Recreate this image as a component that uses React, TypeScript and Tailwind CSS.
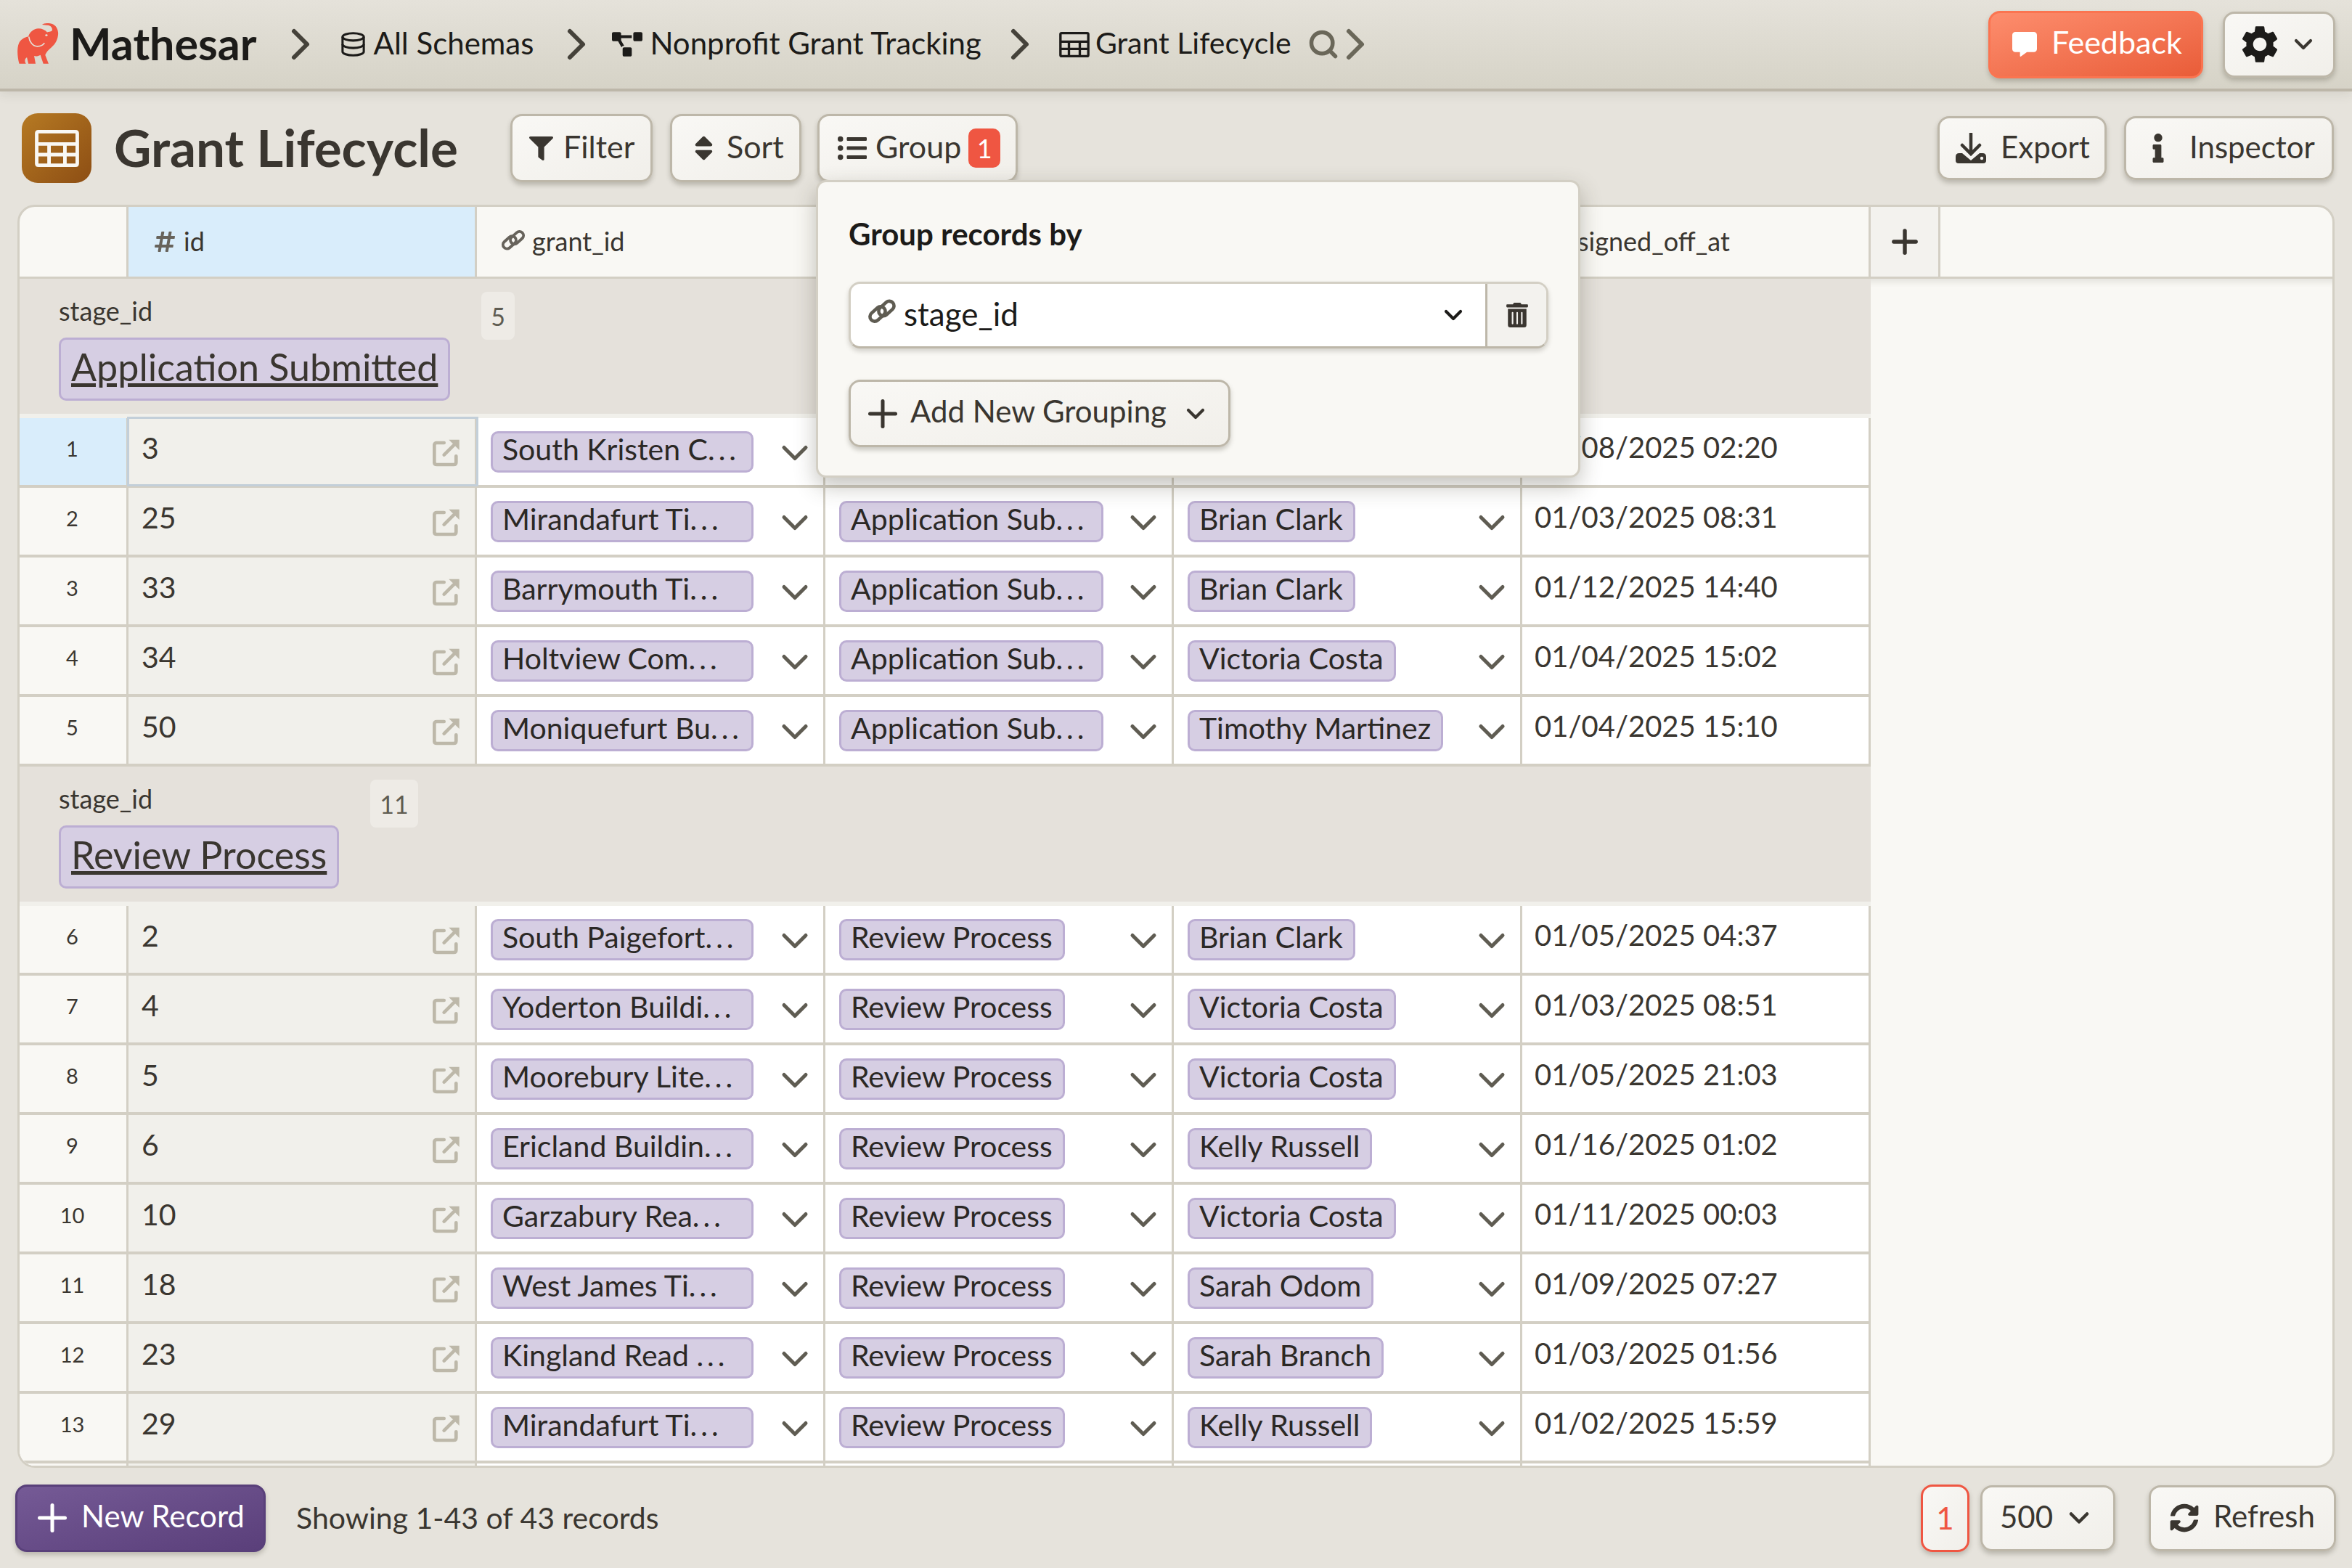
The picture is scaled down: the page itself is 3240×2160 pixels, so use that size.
import React from "react";
import { FaSort, FaFilter, FaListUl, FaInfo, FaHashtag, FaSyncAlt, FaTrashAlt, FaProjectDiagram, FaCommentAlt } from "react-icons/fa";
import { MdSettings } from "react-icons/md";
import { ChevronRight, ChevronDown, Plus, Search } from "lucide-react";

const font = "font-['Lato','Open_Sans',sans-serif]";
const btn = "flex items-center rounded-[16px] border-[3px] border-[#bdb7a9] bg-gradient-to-br from-[#f9f8f5] to-[#f1efea] shadow-[0_4px_6px_rgba(60,55,40,0.25)] text-[#3a3630]";

function Elephant() {
  return (
    <svg viewBox="40 40 180 175" className="w-[60px] h-[58px] shrink-0">
      <path fill="#ef5642" d="M50 208 C42 180 40 145 48 125 C55 108 72 98 88 96 C92 78 110 62 130 62 C145 62 158 68 166 78 C172 76 180 76 186 72 C190 60 182 48 165 48 L145 46 C152 40 170 38 185 42 C205 48 215 70 211 92 C208 112 198 128 184 140 C172 150 162 160 158 172 L172 208 L150 208 C146 195 142 185 138 172 C128 178 118 178 112 176 L118 208 L88 208 L82 182 C72 188 72 200 78 208 Z" />
      <path fill="none" stroke="#e4e1d9" strokeWidth="5" d="M90 96 C92 115 105 135 125 136 C140 136 150 130 155 122" />
      <ellipse cx="163" cy="90" rx="5" ry="4" fill="#e4e1d9" />
    </svg>
  );
}

function TableIcon({ className }: { className: string }) {
  return (
    <svg viewBox="40 35 125 105" className={className}>
      <path fill="currentColor" fillRule="evenodd" d="M50 35 H155 Q165 35 165 45 V130 Q165 140 155 140 H50 Q40 140 40 130 V45 Q40 35 50 35 Z M50 45 V70 H155 V45 Z M50 80 V100 H75 V80 Z M85 80 V100 H120 V80 Z M130 80 V100 H155 V80 Z M50 110 V130 H75 V110 Z M85 110 V130 H120 V110 Z M130 110 V130 H155 V110 Z" />
    </svg>
  );
}

function DbIcon() {
  return (
    <svg viewBox="0 0 96 100" fill="none" stroke="currentColor" strokeWidth="9" className="ml-[20px] w-[33px] h-[34px] shrink-0">
      <ellipse cx="48" cy="20" rx="43" ry="15" />
      <path d="M5 20 V80 C5 88 24 95 48 95 C72 95 91 88 91 80 V20" />
      <path d="M5 50 C5 58 24 65 48 65 C72 65 91 58 91 50" />
    </svg>
  );
}

function LinkIcon({ className }: { className: string }) {
  return (
    <svg viewBox="0 0 40 34" fill="none" stroke="currentColor" strokeWidth="4.6" className={className}>
      <rect x="2" y="14" width="24" height="13" rx="6.5" transform="rotate(-42 14 20.5)" />
      <rect x="14" y="6.5" width="24" height="13" rx="6.5" transform="rotate(-42 26 13)" />
    </svg>
  );
}

function LinkOut() {
  return (
    <svg viewBox="0 0 40 40" className="ml-auto mt-[4px] w-[40px] h-[40px] shrink-0 text-[#bdb8a9]" fill="none" stroke="currentColor" strokeWidth="4.7" strokeLinecap="round" strokeLinejoin="round">
      <path d="M15.7 6 H5.7 Q2.3 6 2.3 9.3 V32.7 Q2.3 36 5.7 36 H29 Q32.3 36 32.3 32.7 V24.3" />
      <path d="M15.7 22.7 L29 9.4" />
      <path d="M22.3 1.7 H36.7 V16 Z" fill="currentColor" stroke="none" />
    </svg>
  );
}

function ExportIcon() {
  return (
    <svg viewBox="0 0 42 42" className="w-[42px] h-[42px] shrink-0">
      <path d="M21 1 V27 M9 17 L21 29 L33 17" fill="none" stroke="currentColor" strokeWidth="4.5" strokeLinecap="round" />
      <path fill="currentColor" d="M0 33 Q0 28 5 28 H9 L21 38 L33 28 H37 Q42 28 42 33 V38 Q42 42 38 42 H4 Q0 42 0 38 Z" />
      <circle cx="36" cy="35" r="2.2" fill="#f5f3ef" />
    </svg>
  );
}

function Chip({ text, w }: { text: string; w?: string }) {
  const cut = text.endsWith("…");
  return (
    <div className={`h-[57px] shrink-0 rounded-[10px] border-[3px] border-[#bcaed3] bg-[#d6cee3] pl-[13px] pr-[14px] text-[41px] leading-[43px] whitespace-nowrap text-[#2b2825] ${w ?? ""}`}>
      {cut ? text.slice(0, -1) : text}
      {cut ? <span className="tracking-[5px]">...</span> : null}
    </div>
  );
}

type R = { n: number; id: number; g: string; s: string; u: string; d: string };
const A = "Application Sub…";
const P = "Review Process";
const g1: R[] = [
  { n: 1, id: 3, g: "South Kristen C…", s: A, u: "Brian Clark", d: "01/08/2025 02:20" },
  { n: 2, id: 25, g: "Mirandafurt Ti…", s: A, u: "Brian Clark", d: "01/03/2025 08:31" },
  { n: 3, id: 33, g: "Barrymouth Ti…", s: A, u: "Brian Clark", d: "01/12/2025 14:40" },
  { n: 4, id: 34, g: "Holtview Com…", s: A, u: "Victoria Costa", d: "01/04/2025 15:02" },
  { n: 5, id: 50, g: "Moniquefurt Bu…", s: A, u: "Timothy Martinez", d: "01/04/2025 15:10" },
];
const g2: R[] = [
  { n: 6, id: 2, g: "South Paigefort…", s: P, u: "Brian Clark", d: "01/05/2025 04:37" },
  { n: 7, id: 4, g: "Yoderton Buildi…", s: P, u: "Victoria Costa", d: "01/03/2025 08:51" },
  { n: 8, id: 5, g: "Moorebury Lite…", s: P, u: "Victoria Costa", d: "01/05/2025 21:03" },
  { n: 9, id: 6, g: "Ericland Buildin…", s: P, u: "Kelly Russell", d: "01/16/2025 01:02" },
  { n: 10, id: 10, g: "Garzabury Rea…", s: P, u: "Victoria Costa", d: "01/11/2025 00:03" },
  { n: 11, id: 18, g: "West James Ti…", s: P, u: "Sarah Odom", d: "01/09/2025 07:27" },
  { n: 12, id: 23, g: "Kingland Read …", s: P, u: "Sarah Branch", d: "01/03/2025 01:56" },
  { n: 13, id: 29, g: "Mirandafurt Ti…", s: P, u: "Kelly Russell", d: "01/02/2025 15:59" },
];

function CellChevron() {
  return <ChevronDown className="ml-auto w-[60px] h-[60px] mt-[4px] text-[#5f5c52] shrink-0" strokeWidth={2} />;
}

function Row({ r }: { r: R }) {
  const active = r.n === 1;
  const cell = "h-full w-[480px] shrink-0 flex items-center border-r-[3px] border-[#d3cfc4]";
  return (
    <div className="flex h-[96px] w-[2550px] shrink-0 border-b-[4px] border-[#d3cfc4] bg-white text-[#3a3630]">
      <div className={`w-[150px] shrink-0 h-full flex items-center justify-center border-r-[3px] border-[#d3cfc4] pr-[2px] pb-[8px] text-[29px] ${active ? "bg-[#d9edfb]" : "bg-[#f9f8f4]"}`}>{r.n}</div>
      <div className={`${cell} bg-[#f1f0eb] pl-[18px] pr-[18px] text-[41px] ${active ? "relative z-10 outline-[3px] outline-[#c3cfd9] -outline-offset-1" : ""}`}>
        <span className="mb-[10px]">{r.id}</span>
        <LinkOut />
      </div>
      <div className={`${cell} pl-[19px] pr-[9px]`}>
        <Chip text={r.g} w="w-[362px]" />
        <CellChevron />
      </div>
      <div className={`${cell} pl-[19px] pr-[9px]`}>
        <Chip text={r.s} w={r.s === A ? "w-[364px]" : undefined} />
        <CellChevron />
      </div>
      <div className={`${cell} pl-[19px] pr-[9px]`}>
        <Chip text={r.u} />
        <CellChevron />
      </div>
      <div className={`${cell} pl-[17px] text-[40px] pb-[12px]`}>{r.d}</div>
    </div>
  );
}

function Group({ title, count }: { title: string; count: number }) {
  return (
    <div className="flex h-[192px] w-[2550px] shrink-0 border-b-[6px] border-[#f1f0eb] bg-[#e5e1db] pl-[54px] pt-[20px]">
      <div className="flex flex-col items-start">
        <div className="text-[36px] leading-[48px] text-[#3a3630]">stage_id</div>
        <div className="mt-[13px] h-[87px] rounded-[10px] border-[3px] border-[#bcaed3] bg-[#d6cee3] px-[14px] text-[52px] leading-[74px] underline whitespace-nowrap text-[#3a3630]">{title}</div>
      </div>
      <div className="ml-[43px] -mt-[2px] h-[66px] rounded-[8px] bg-[#eeebe6] px-[13px] text-[#5f5c52] text-[34px] flex items-center justify-center">{count}</div>
    </div>
  );
}

export default function App() {
  return (
    <div className={`${font} relative flex flex-col w-[3240px] h-[2160px] overflow-hidden bg-[#e6e3dc] text-[#3a3630]`}>
      <header className="h-[126px] shrink-0 flex items-center border-b-[4px] border-[#bdb7a9] bg-gradient-to-b from-[#e5e2da] to-[#d6d3c7] pl-[23px] pr-[23px] text-[#1c1b19] shadow-[0_4px_14px_rgba(60,55,40,0.1)]">
        <Elephant />
        <span className="ml-[13px] text-[61px] font-bold leading-none mb-[4px]">Mathesar</span>
        <ChevronRight className="ml-[24px] w-[72px] h-[72px] text-[#45423a] shrink-0" strokeWidth={2} />
        <DbIcon />
        <span className="ml-[12px] text-[42px] mb-[4px]">All Schemas</span>
        <ChevronRight className="ml-[23px] w-[72px] h-[72px] text-[#45423a] shrink-0" strokeWidth={2} />
        <FaProjectDiagram className="ml-[13px] w-[42px] h-[34px] shrink-0" />
        <span className="ml-[10px] text-[42px] mb-[4px]">Nonprofit Grant Tracking</span>
        <ChevronRight className="ml-[17px] w-[72px] h-[72px] text-[#45423a] shrink-0" strokeWidth={2} />
        <TableIcon className="ml-[18px] w-[42px] h-[35px] shrink-0" />
        <span className="ml-[8px] text-[41px] mb-[4px]">Grant Lifecycle</span>
        <Search className="ml-[22px] w-[44px] h-[44px] text-[#6a6759] shrink-0" strokeWidth={3} />
        <ChevronRight className="-ml-[14px] w-[72px] h-[72px] text-[#6a6759] shrink-0" strokeWidth={2} />
        <div className="ml-auto flex items-center gap-[27px]">
          <div className="flex items-center w-[296px] h-[93px] rounded-[16px] border-[3px] border-[#fb7450] bg-gradient-to-br from-[#fd8d6d] to-[#e95c38] text-white shadow-[0_4px_6px_rgba(60,55,40,0.25)] pl-[30px] text-[43px]">
            <FaCommentAlt className="w-[34px] h-[34px]" />
            <span className="ml-[20px] mb-[6px]">Feedback</span>
          </div>
          <div className={`${btn} w-[155px] h-[91px] pl-[17px]`}>
            <MdSettings className="w-[62px] h-[62px] text-[#1c1b19]" />
            <ChevronDown className="ml-[9px] w-[40px] h-[40px] text-[#3a3630]" strokeWidth={2.5} />
          </div>
        </div>
      </header>

      <div className="h-[156px] shrink-0 flex items-center pl-[30px] pr-[25px]">
        <div className="w-[96px] h-[96px] shrink-0 rounded-[22px] bg-gradient-to-br from-[#b67a23] to-[#8d4e14] flex items-center justify-center">
          <TableIcon className="w-[61px] h-[51px] text-[#f9f8f4]" />
        </div>
        <h1 className="ml-[31px] text-[71px] font-bold leading-none text-[#3a3630] w-[546px] whitespace-nowrap mb-[4px]">Grant Lifecycle</h1>
        <div className={`${btn} w-[196px] h-[94px] pl-[23px] text-[43px] text-[#3a3630]`}>
          <FaFilter className="w-[33px] h-[33px]" />
          <span className="ml-[14px] mb-[4px]">Filter</span>
        </div>
        <div className={`${btn} ml-[24px] w-[181px] h-[94px] pl-[30px] text-[43px]`}>
          <FaSort className="w-[27px] h-[42px]" />
          <span className="ml-[18px] mb-[4px]">Sort</span>
        </div>
        <div className={`${btn} ml-[22px] w-[276px] h-[94px] pl-[23px] text-[43px]`}>
          <FaListUl className="w-[44px] h-[40px]" />
          <span className="ml-[10px] mb-[4px]">Group</span>
          <span className="ml-[10px] w-[44px] h-[54px] rounded-[10px] bg-[#ef5642] text-white text-[36px] flex items-center justify-center">1</span>
        </div>
        <div className={`${btn} ml-auto w-[233px] h-[88px] pl-[22px] text-[42px]`}>
          <ExportIcon />
          <span className="ml-[20px] mb-[4px]">Export</span>
        </div>
        <div className={`${btn} ml-[24px] w-[289px] h-[88px] pl-[26px] text-[42px]`}>
          <FaInfo className="w-[36px] h-[40px]" />
          <span className="ml-[25px] mb-[4px]">Inspector</span>
        </div>
      </div>

      <div className="mx-[24px] flex-1 min-h-0 rounded-[24px] border-[3px] border-[#d3cfc4] bg-[#f9f8f4] overflow-hidden flex flex-col">
        <div className="flex h-[99px] shrink-0 border-b-[3px] border-[#d3cfc4] text-[36px] text-[#3a3630]">
          <div className="w-[150px] shrink-0 border-r-[3px] border-[#d3cfc4]" />
          <div className="w-[480px] shrink-0 flex items-center bg-[#d9edfb] border-r-[3px] border-[#d3cfc4] pl-[34px]">
            <FaHashtag className="w-[32px] h-[32px] text-[#67635b]" />
            <span className="ml-[10px] mb-[2px]">id</span>
          </div>
          <div className="w-[480px] shrink-0 flex items-center border-r-[3px] border-[#d3cfc4] pl-[33px]">
            <LinkIcon className="w-[34px] h-[30px] text-[#67635b] mb-[4px]" />
            <span className="ml-[9px] mb-[2px]">grant_id</span>
          </div>
          <div className="w-[480px] shrink-0 border-r-[3px] border-[#d3cfc4]" />
          <div className="w-[480px] shrink-0 border-r-[3px] border-[#d3cfc4]" />
          <div className="w-[480px] shrink-0 flex items-center border-r-[3px] border-[#d3cfc4] pl-[76px]"><span className="mb-[2px]">signed_off_at</span></div>
          <div className="w-[96px] shrink-0 flex items-center justify-center bg-[#f3f2ee] border-r-[3px] border-[#d3cfc4]">
            <Plus className="w-[52px] h-[52px]" strokeWidth={2.5} />
          </div>
        </div>
        <div className="flex-1 min-h-0 flex flex-col overflow-hidden shadow-[inset_0_12px_10px_-8px_rgba(60,55,40,0.12)]">
          <Group title="Application Submitted" count={5} />
          {g1.map((r) => <Row key={r.n} r={r} />)}
          <Group title="Review Process" count={11} />
          {g2.map((r) => <Row key={r.n} r={r} />)}
          <div className="flex h-[20px] w-[2550px] shrink-0 bg-white">
            <div className="w-[150px] shrink-0 bg-[#f9f8f4] border-r-[3px] border-[#d3cfc4]" />
            <div className="w-[480px] shrink-0 bg-[#f1f0eb] border-r-[3px] border-[#d3cfc4]" />
            <div className="w-[480px] shrink-0 border-r-[3px] border-[#d3cfc4]" />
            <div className="w-[480px] shrink-0 border-r-[3px] border-[#d3cfc4]" />
            <div className="w-[480px] shrink-0 border-r-[3px] border-[#d3cfc4]" />
            <div className="w-[480px] shrink-0 border-r-[3px] border-[#d3cfc4]" />
          </div>
        </div>
      </div>

      <footer className="h-[138px] shrink-0 flex items-center pl-[21px] pr-[22px] text-[42px]">
        <div className="flex items-center w-[345px] h-[93px] rounded-[16px] border-[3px] border-[#59407a] bg-gradient-to-br from-[#755a96] to-[#5a3f7a] text-white pl-[18px] shadow-[0_4px_6px_rgba(60,55,40,0.25)]">
          <Plus className="w-[60px] h-[60px]" strokeWidth={2} />
          <span className="ml-[10px] mb-[6px]">New Record</span>
        </div>
        <span className="ml-[42px] text-[41px]">Showing 1-43 of 43 records</span>
        <div className="ml-auto flex items-center w-[67px] h-[93px] justify-center rounded-[16px] border-[3px] border-[#ef5642] bg-gradient-to-br from-[#f9f8f5] to-[#f1efea] text-[#ef5642] shadow-[0_4px_6px_rgba(60,55,40,0.25)]">1</div>
        <div className={`${btn} ml-[15px] w-[186px] h-[91px] pl-[24px]`}>
          <span className="mb-[4px]">500</span>
          <ChevronDown className="ml-[14px] w-[44px] h-[44px]" strokeWidth={2.5} />
        </div>
        <div className={`${btn} ml-[46px] w-[258px] h-[91px] pl-[26px]`}>
          <FaSyncAlt className="w-[40px] h-[40px]" />
          <span className="ml-[20px] mb-[6px]">Refresh</span>
        </div>
      </footer>

      <div className="absolute left-[1124px] top-[248px] w-[1053px] h-[410px] rounded-[14px] border-[3px] border-[#d3cfc4] bg-[#f9f8f4] shadow-[0_12px_30px_rgba(60,55,40,0.3)] pl-[42px] pt-[46px]">
        <div className="text-[42px] font-bold leading-[50px] text-[#1c1b19]">Group records by</div>
        <div className="mt-[41px] flex w-[964px] h-[92px] rounded-[16px] border-[3px] border-[#d3cfc4] border-b-[#bdb7a9] bg-white shadow-[0_4px_6px_rgba(60,55,40,0.2)] overflow-hidden">
          <div className="flex-1 flex items-center pl-[23px] text-[#1c1b19] text-[44px]">
            <LinkIcon className="w-[40px] h-[34px] text-[#5f5c52] mb-[10px]" />
            <span className="ml-[10px] mb-[4px]">stage_id</span>
            <ChevronDown className="ml-auto mr-[24px] w-[40px] h-[40px]" strokeWidth={2.5} />
          </div>
          <div className="w-[84px] flex items-center justify-center border-l-[3px] border-[#bdb7a9] bg-[#f3f2ee]">
            <FaTrashAlt className="w-[30px] h-[34px]" />
          </div>
        </div>
        <div className={`${btn} mt-[43px] w-[526px] h-[93px] pl-[14px]`}>
          <Plus className="w-[60px] h-[60px]" strokeWidth={2} />
          <span className="ml-[8px] mb-[6px] text-[42px]">Add New Grouping</span>
          <ChevronDown className="ml-[20px] w-[40px] h-[40px]" strokeWidth={2.5} />
        </div>
      </div>
    </div>
  );
}
